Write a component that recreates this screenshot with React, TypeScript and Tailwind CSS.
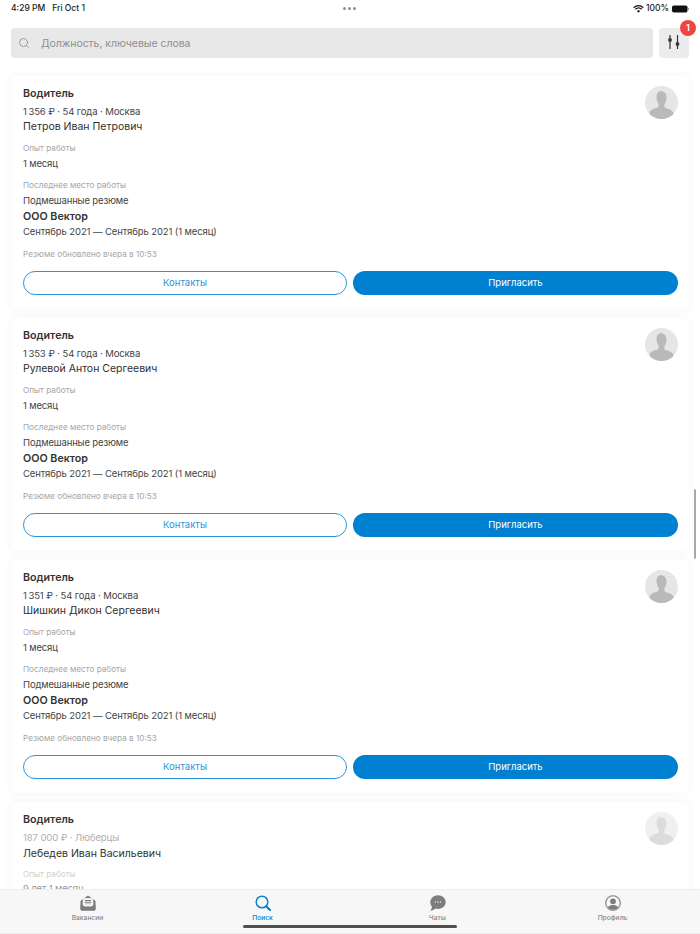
import React from "react";
import { Search } from "lucide-react";

function Avatar({ faded }: { faded?: boolean }) {
  return (
    <svg width="33" height="33" viewBox="0 0 33 33" className="absolute top-[10px] right-[11px]">
      <defs>
        <clipPath id={faded ? "avf" : "avn"}>
          <circle cx="16.5" cy="16.5" r="16.5" />
        </clipPath>
      </defs>
      <circle cx="16.5" cy="16.5" r="16.5" fill={faded ? "#f0f0f0" : "#e6e6e6"} />
      <g clipPath={`url(#${faded ? "avf" : "avn"})`} fill={faded ? "#dcdcdc" : "#b9b9b9"}>
        <path d="M16.5 5.500c3.200 0 5 2.400 5 5.700 0 2.900-.9 5.400-2.100 7v2.500c0 1 3 1.800 5.600 2.900 1.800.8 2.800 1.800 3.400 3.400V33H4.600v-6.500c.6-1.600 1.600-2.600 3.400-3.400 2.600-1.100 5.600-1.900 5.600-2.900v-2.500c-1.200-1.600-2.100-4.100-2.100-7 0-3.300 1.800-5.700 5-5.700z" />
      </g>
    </svg>
  );
}

type CardData = { pay: string; name: string };

function Card({ pay, name }: CardData) {
  return (
    <div className="relative mx-[11px] h-[233px] shrink-0 rounded-[6px] bg-white pt-[11px] pr-[11px] pl-[12px] shadow-[0_0_10px_rgba(0,0,0,0.05)]">
      <Avatar />
      <div className="h-[14px] text-[10.7px] leading-[14px] font-semibold text-[#333]">Водитель</div>
      <div className="mt-[4px] h-[13px] text-[9.5px] leading-[13px] tracking-[-0.1px] text-[#444]">{pay}</div>
      <div className="mt-[1px] h-[16px] text-[10.5px] leading-[16px] text-[#303030]">{name}</div>
      <div className="mt-[7px] h-[12px] text-[8.2px] leading-[12px] text-[#a6a6a6]">Опыт работы</div>
      <div className="mt-[3px] h-[14px] text-[9.5px] leading-[14px] tracking-[-0.15px] text-[#444]">1 месяц</div>
      <div className="mt-[8px] h-[12px] text-[8.2px] leading-[12px] text-[#a6a6a6]">Последнее место работы</div>
      <div className="mt-[3px] h-[14px] text-[9.5px] leading-[14px] tracking-[-0.15px] text-[#444]">Подмешанные резюме</div>
      <div className="mt-[1px] h-[15px] text-[10.7px] leading-[15px] font-semibold text-[#333]">ООО Вектор</div>
      <div className="h-[15px] text-[9.5px] leading-[15px] tracking-[-0.1px] text-[#444]">Сентябрь 2021 — Сентябрь 2021 (1 месяц)</div>
      <div className="mt-[9px] h-[12px] text-[8.2px] leading-[12px] text-[#a6a6a6]">Резюме обновлено вчера в 10:53</div>
      <div className="mt-[11px] flex gap-[6px]">
        <button className="flex h-[24px] w-[324px] flex-none items-center justify-center rounded-full border border-[#2a95d8] bg-white text-[9.5px] text-[#2a95d8]">
          Контакты
        </button>
        <button className="flex h-[24px] flex-1 items-center justify-center rounded-full bg-[#0080d0] text-[9.5px] text-white">
          Пригласить
        </button>
      </div>
    </div>
  );
}

function LastCard() {
  return (
    <div className="relative mx-[11px] h-[233px] shrink-0 rounded-[6px] bg-white pt-[11px] pr-[11px] pl-[12px] shadow-[0_0_10px_rgba(0,0,0,0.05)]">
      <Avatar faded />
      <div className="h-[14px] text-[10.7px] leading-[14px] font-semibold text-[#333]">Водитель</div>
      <div className="mt-[4px] h-[13px] text-[9.5px] leading-[13px] tracking-[-0.1px] text-[#b0b0b0]">187 000 ₽ · Люберцы</div>
      <div className="mt-[2px] h-[16px] text-[10.5px] leading-[16px] text-[#303030]">Лебедев Иван Васильевич</div>
      <div className="mt-[6px] h-[12px] text-[8.2px] leading-[12px] text-[#d0d0d0]">Опыт работы</div>
      <div className="mt-[2px] h-[14px] text-[9.5px] leading-[14px] tracking-[-0.15px] text-[#999]">9 лет 1 месяц</div>
    </div>
  );
}

function FilterIcon() {
  return (
    <svg width="14" height="18" viewBox="0 0 14 18" fill="#333" stroke="#333">
      <path d="M3 1v14M10.500 1v14" strokeWidth="1.200" fill="none" />
      <circle cx="3" cy="6" r="1.900" stroke="none" />
      <circle cx="10.500" cy="10" r="1.900" stroke="none" />
    </svg>
  );
}

function TabVacancies() {
  return (
    <svg width="16" height="16" viewBox="0 0 16 16">
      <path d="M0.500 5.800 8 0.500l7.500 5.300V14a1.500 1.500 0 0 1-1.500 1.500H2A1.500 1.500 0 0 1 .5 14z" fill="#7d7d7d" />
      <rect x="2.700" y="3" width="10.600" height="8.500" rx="2" fill="#f0f0f0" />
      <path d="M5 5.600h6M5 7.800h6" stroke="#7d7d7d" strokeWidth="1.100" />
      <path d="M0.500 9.500 5 12.300h6l4.500-2.800V14a1.500 1.500 0 0 1-1.500 1.500H2A1.500 1.500 0 0 1 .5 14z" fill="#7d7d7d" />
    </svg>
  );
}

function TabSearch() {
  return (
    <svg width="16" height="16" viewBox="0 0 16 16" fill="none" stroke="#0a83cf">
      <circle cx="7" cy="7" r="5.800" strokeWidth="1.500" />
      <path d="M11.200 11.200 15 15" strokeWidth="2.200" strokeLinecap="round" />
    </svg>
  );
}

function TabChats() {
  return (
    <svg width="16" height="16" viewBox="0 0 16 16">
      <path d="M8 .3c4.300 0 7.700 3 7.700 6.800S12.300 14 8 14c-.9 0-1.700-.1-2.500-.4C4.300 14.700 2.300 15.700 0 15.700c1.100-1 1.800-2.300 2-3.700C1 10.700.3 9 .3 7.100.3 3.300 3.700.3 8 .3z" fill="#7d7d7d" />
      <circle cx="5.500" cy="7" r=".7" fill="#f0f0f0" />
      <circle cx="8" cy="7" r=".7" fill="#f0f0f0" />
      <circle cx="10.500" cy="7" r=".7" fill="#f0f0f0" />
    </svg>
  );
}

function TabProfile() {
  return (
    <svg width="16" height="16" viewBox="0 0 16 16">
      <defs>
        <clipPath id="tp">
          <circle cx="8" cy="8" r="6.700" />
        </clipPath>
      </defs>
      <circle cx="8" cy="8" r="7.300" fill="none" stroke="#7d7d7d" strokeWidth="1.100" />
      <g clipPath="url(#tp)" fill="#7d7d7d">
        <circle cx="8" cy="6.300" r="2.900" />
        <ellipse cx="8" cy="14.500" rx="6" ry="4.500" />
      </g>
    </svg>
  );
}

function Tab({ label, active, children }: { label: string; active?: boolean; children: React.ReactNode }) {
  return (
    <div className="flex flex-1 flex-col items-center pt-[5px]">
      <div className="h-[16px]">{children}</div>
      <div className={`mt-[3px] text-[6.7px] leading-[9px] font-medium ${active ? "text-[#0a83cf]" : "text-[#8a8a8a]"}`}>{label}</div>
    </div>
  );
}

const cards: CardData[] = [
  { pay: "1\u2009356 ₽ · 54 года · Москва", name: "Петров Иван Петрович" },
  { pay: "1\u2009353 ₽ · 54 года · Москва", name: "Рулевой Антон Сергеевич" },
  { pay: "1\u2009351 ₽ · 54 года · Москва", name: "Шишкин Дикон Сергеевич" },
];

export default function App() {
  return (
    <div className="relative flex h-[934px] w-[700px] flex-col overflow-hidden bg-white font-['Inter',sans-serif]">
      <div className="flex h-[17px] shrink-0 items-center justify-between pr-[10px] pl-[11px] text-[8.500px] font-medium text-[#222]">
        <div className="flex gap-[7px]">
          <span>4:29 PM</span>
          <span>Fri Oct 1</span>
        </div>
        <div className="flex items-center gap-[2px]">
          <svg width="11" height="8" viewBox="0 0 11 8" fill="none" stroke="#111">
            <path d="M.7 2.700C3.500 0 7.500 0 10.300 2.700M2.300 4.200c1.900-1.700 4.500-1.700 6.400 0" strokeWidth="1.200" />
            <path d="M5.500 7.800 3.800 5.800c1-.8 2.400-.8 3.400 0z" fill="#111" stroke="none" />
          </svg>
          <span>100%</span>
          <svg width="18" height="8" viewBox="0 0 18 8" className="ml-[1px]">
            <rect x="0" y="0.500" width="15.500" height="7" rx="1.800" fill="#111" />
            <rect x="16" y="2.700" width="1" height="2.600" rx=".5" fill="#999" />
          </svg>
        </div>
      </div>
      <div className="absolute top-[7px] left-[343px] flex gap-[2px]">
        <span className="h-[3px] w-[3px] rounded-full bg-[#8e8e8e]" />
        <span className="h-[3px] w-[3px] rounded-full bg-[#8e8e8e]" />
        <span className="h-[3px] w-[3px] rounded-full bg-[#8e8e8e]" />
      </div>

      <div className="relative z-10 flex h-[50px] shrink-0 gap-[6px] bg-white px-[11px] pt-[11px]">
        <div className="flex h-[30px] flex-1 items-center rounded-[4px] bg-[#e8e8e8] pl-[7px]">
          <Search size={12} strokeWidth={1.600} color="#8a8a8a" />
          <span className="ml-[11px] pt-[1px] text-[10.500px] tracking-[-0.05px] text-[#8e8e8e]">Должность, ключевые слова</span>
        </div>
        <div className="relative flex h-[30px] w-[30px] items-center justify-center rounded-[4px] bg-[#ececec]">
          <FilterIcon />
          <div className="absolute top-[-8px] right-[-7px] flex h-[16px] w-[16px] items-center justify-center rounded-full bg-[#ef4444] text-[9px] font-semibold text-white">
            1
          </div>
        </div>
      </div>

      <div className="flex min-h-0 flex-1 flex-col gap-[9px] overflow-hidden bg-white pt-[9px]">
        {cards.map((c) => (
          <Card key={c.name} {...c} />
        ))}
        <LastCard />
      </div>

      <div className="absolute top-[489px] right-[4px] h-[70px] w-[2px] rounded-full bg-[#a8a8a8]" />

      <div className="relative z-10 flex h-[45px] shrink-0 border-t border-b border-[#ececec] bg-[#f7f7f7]">
        <Tab label="Вакансии"><TabVacancies /></Tab>
        <Tab label="Поиск" active><TabSearch /></Tab>
        <Tab label="Чаты"><TabChats /></Tab>
        <Tab label="Профиль"><TabProfile /></Tab>
      </div>
      <div className="absolute top-[925px] left-[243px] z-20 h-[3px] w-[214px] rounded-full bg-[#4f4f4f]" />
    </div>
  );
}
